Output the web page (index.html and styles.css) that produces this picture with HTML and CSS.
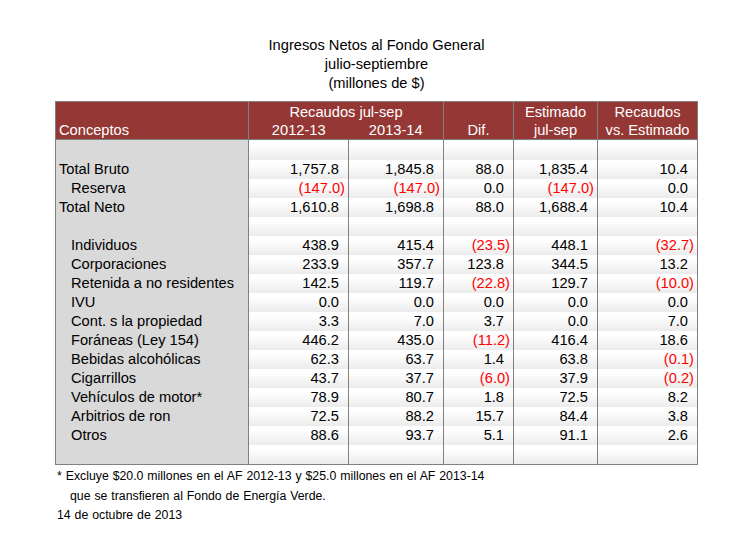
FILE: index.html
```html
<!DOCTYPE html>
<html lang="es">
<head>
<meta charset="utf-8">
<title>Ingresos Netos al Fondo General</title>
<link rel="stylesheet" href="styles.css">
</head>
<body>
<div class="page">
  <div class="title">
    <div>Ingresos Netos al Fondo General</div>
    <div>julio-septiembre</div>
    <div>(millones de $)</div>
  </div>
  <table class="report">
    <colgroup>
      <col class="c-concept">
      <col class="c-a">
      <col class="c-b">
      <col class="c-dif">
      <col class="c-est">
      <col class="c-vs">
    </colgroup>
    <thead>
      <tr class="h1">
        <th class="concept vline"></th>
        <th colspan="2" class="vline">Recaudos jul-sep</th>
        <th class="vline"></th>
        <th class="vline">Estimado</th>
        <th>Recaudos</th>
      </tr>
      <tr class="h2">
        <th class="concept left vline">Conceptos</th>
        <th>2012-13</th>
        <th class="vline">2013-14</th>
        <th class="vline">Dif.</th>
        <th class="vline">jul-sep</th>
        <th>vs. Estimado</th>
      </tr>
    </thead>
    <tbody>
      <tr class="blank first"><td class="concept"></td><td></td><td></td><td></td><td></td><td></td></tr>
      <tr><td class="concept">Total Bruto</td><td>1,757.8</td><td>1,845.8</td><td>88.0</td><td>1,835.4</td><td>10.4</td></tr>
      <tr><td class="concept sub">Reserva</td><td><span class="neg">(147.0)</span></td><td><span class="neg">(147.0)</span></td><td>0.0</td><td><span class="neg">(147.0)</span></td><td>0.0</td></tr>
      <tr><td class="concept">Total Neto</td><td>1,610.8</td><td>1,698.8</td><td>88.0</td><td>1,688.4</td><td>10.4</td></tr>
      <tr class="blank"><td class="concept"></td><td></td><td></td><td></td><td></td><td></td></tr>
      <tr><td class="concept sub">Individuos</td><td>438.9</td><td>415.4</td><td><span class="neg">(23.5)</span></td><td>448.1</td><td><span class="neg">(32.7)</span></td></tr>
      <tr><td class="concept sub">Corporaciones</td><td>233.9</td><td>357.7</td><td>123.8</td><td>344.5</td><td>13.2</td></tr>
      <tr><td class="concept sub">Retenida a no residentes</td><td>142.5</td><td>119.7</td><td><span class="neg">(22.8)</span></td><td>129.7</td><td><span class="neg">(10.0)</span></td></tr>
      <tr><td class="concept sub">IVU</td><td>0.0</td><td>0.0</td><td>0.0</td><td>0.0</td><td>0.0</td></tr>
      <tr><td class="concept sub">Cont. s la propiedad</td><td>3.3</td><td>7.0</td><td>3.7</td><td>0.0</td><td>7.0</td></tr>
      <tr><td class="concept sub">Foráneas (Ley 154)</td><td>446.2</td><td>435.0</td><td><span class="neg">(11.2)</span></td><td>416.4</td><td>18.6</td></tr>
      <tr><td class="concept sub">Bebidas alcohólicas</td><td>62.3</td><td>63.7</td><td>1.4</td><td>63.8</td><td><span class="neg">(0.1)</span></td></tr>
      <tr><td class="concept sub">Cigarrillos</td><td>43.7</td><td>37.7</td><td><span class="neg">(6.0)</span></td><td>37.9</td><td><span class="neg">(0.2)</span></td></tr>
      <tr><td class="concept sub">Vehículos de motor*</td><td>78.9</td><td>80.7</td><td>1.8</td><td>72.5</td><td>8.2</td></tr>
      <tr><td class="concept sub">Arbitrios de ron</td><td>72.5</td><td>88.2</td><td>15.7</td><td>84.4</td><td>3.8</td></tr>
      <tr><td class="concept sub">Otros</td><td>88.6</td><td>93.7</td><td>5.1</td><td>91.1</td><td>2.6</td></tr>
      <tr class="blank"><td class="concept"></td><td></td><td></td><td></td><td></td><td></td></tr>
    </tbody>
  </table>
  <div class="notes">
    <div>* Excluye $20.0 millones en el AF 2012-13 y $25.0 millones en el AF 2013-14</div>
    <div class="indent">que se transfieren al Fondo de Energía Verde.</div>
    <div>14 de octubre de 2013</div>
  </div>
</div>
</body>
</html>
```
FILE: styles.css
```css
html, body {
  margin: 0;
  padding: 0;
  background: #ffffff;
}

.page {
  width: 753px;
  padding-top: 36px;
  font-family: "Liberation Sans", Arial, sans-serif;
  color: #000;
}

.title {
  text-align: center;
  font-size: 14.67px;
  line-height: 19px;
}

.report {
  margin: 8px 0 0 55px;
  border-collapse: collapse;
  table-layout: fixed;
  width: 642px;
  border: 1px solid #808080;
  font-size: 14.67px;
}

.c-concept { width: 193px; }
.c-a { width: 100px; }
.c-b { width: 95px; }
.c-dif { width: 70px; }
.c-est { width: 84px; }
.c-vs { width: 100px; }

.report th {
  background: #953735;
  color: #ffffff;
  font-weight: normal;
  text-align: center;
  height: 18px;
  line-height: 18px;
  padding: 0 1px;
  white-space: nowrap;
}

.report .h1 th { padding-top: 1px; vertical-align: bottom; }
.report .h2 th { border-bottom: 1px solid #808080; vertical-align: bottom; }

.report th.left { text-align: left; padding-left: 3px; }

.report .vline { border-right: 1px solid #808080; }

.report td {
  height: 19px;
  line-height: 19px;
  padding: 0 9px 0 0;
  text-align: right;
  white-space: nowrap;
  border-right: 1px solid #808080;
  background: linear-gradient(to bottom, #ffffff 0%, #ffffff 20%, #ebebeb 100%);
}

.report tr.first td { height: 20px; }

.report td.concept {
  background: #d9d9d9;
  text-align: left;
  padding: 0 0 0 3px;
}

.report td.sub { padding-left: 15px; }

.neg {
  color: #ff0000;
  margin-right: -6px;
}

.notes {
  margin: 2px 0 0 57px;
  font-size: 12.3px;
  line-height: 19.5px;
  word-spacing: 0.5px;
}

.notes .indent { padding-left: 13px; }
```
